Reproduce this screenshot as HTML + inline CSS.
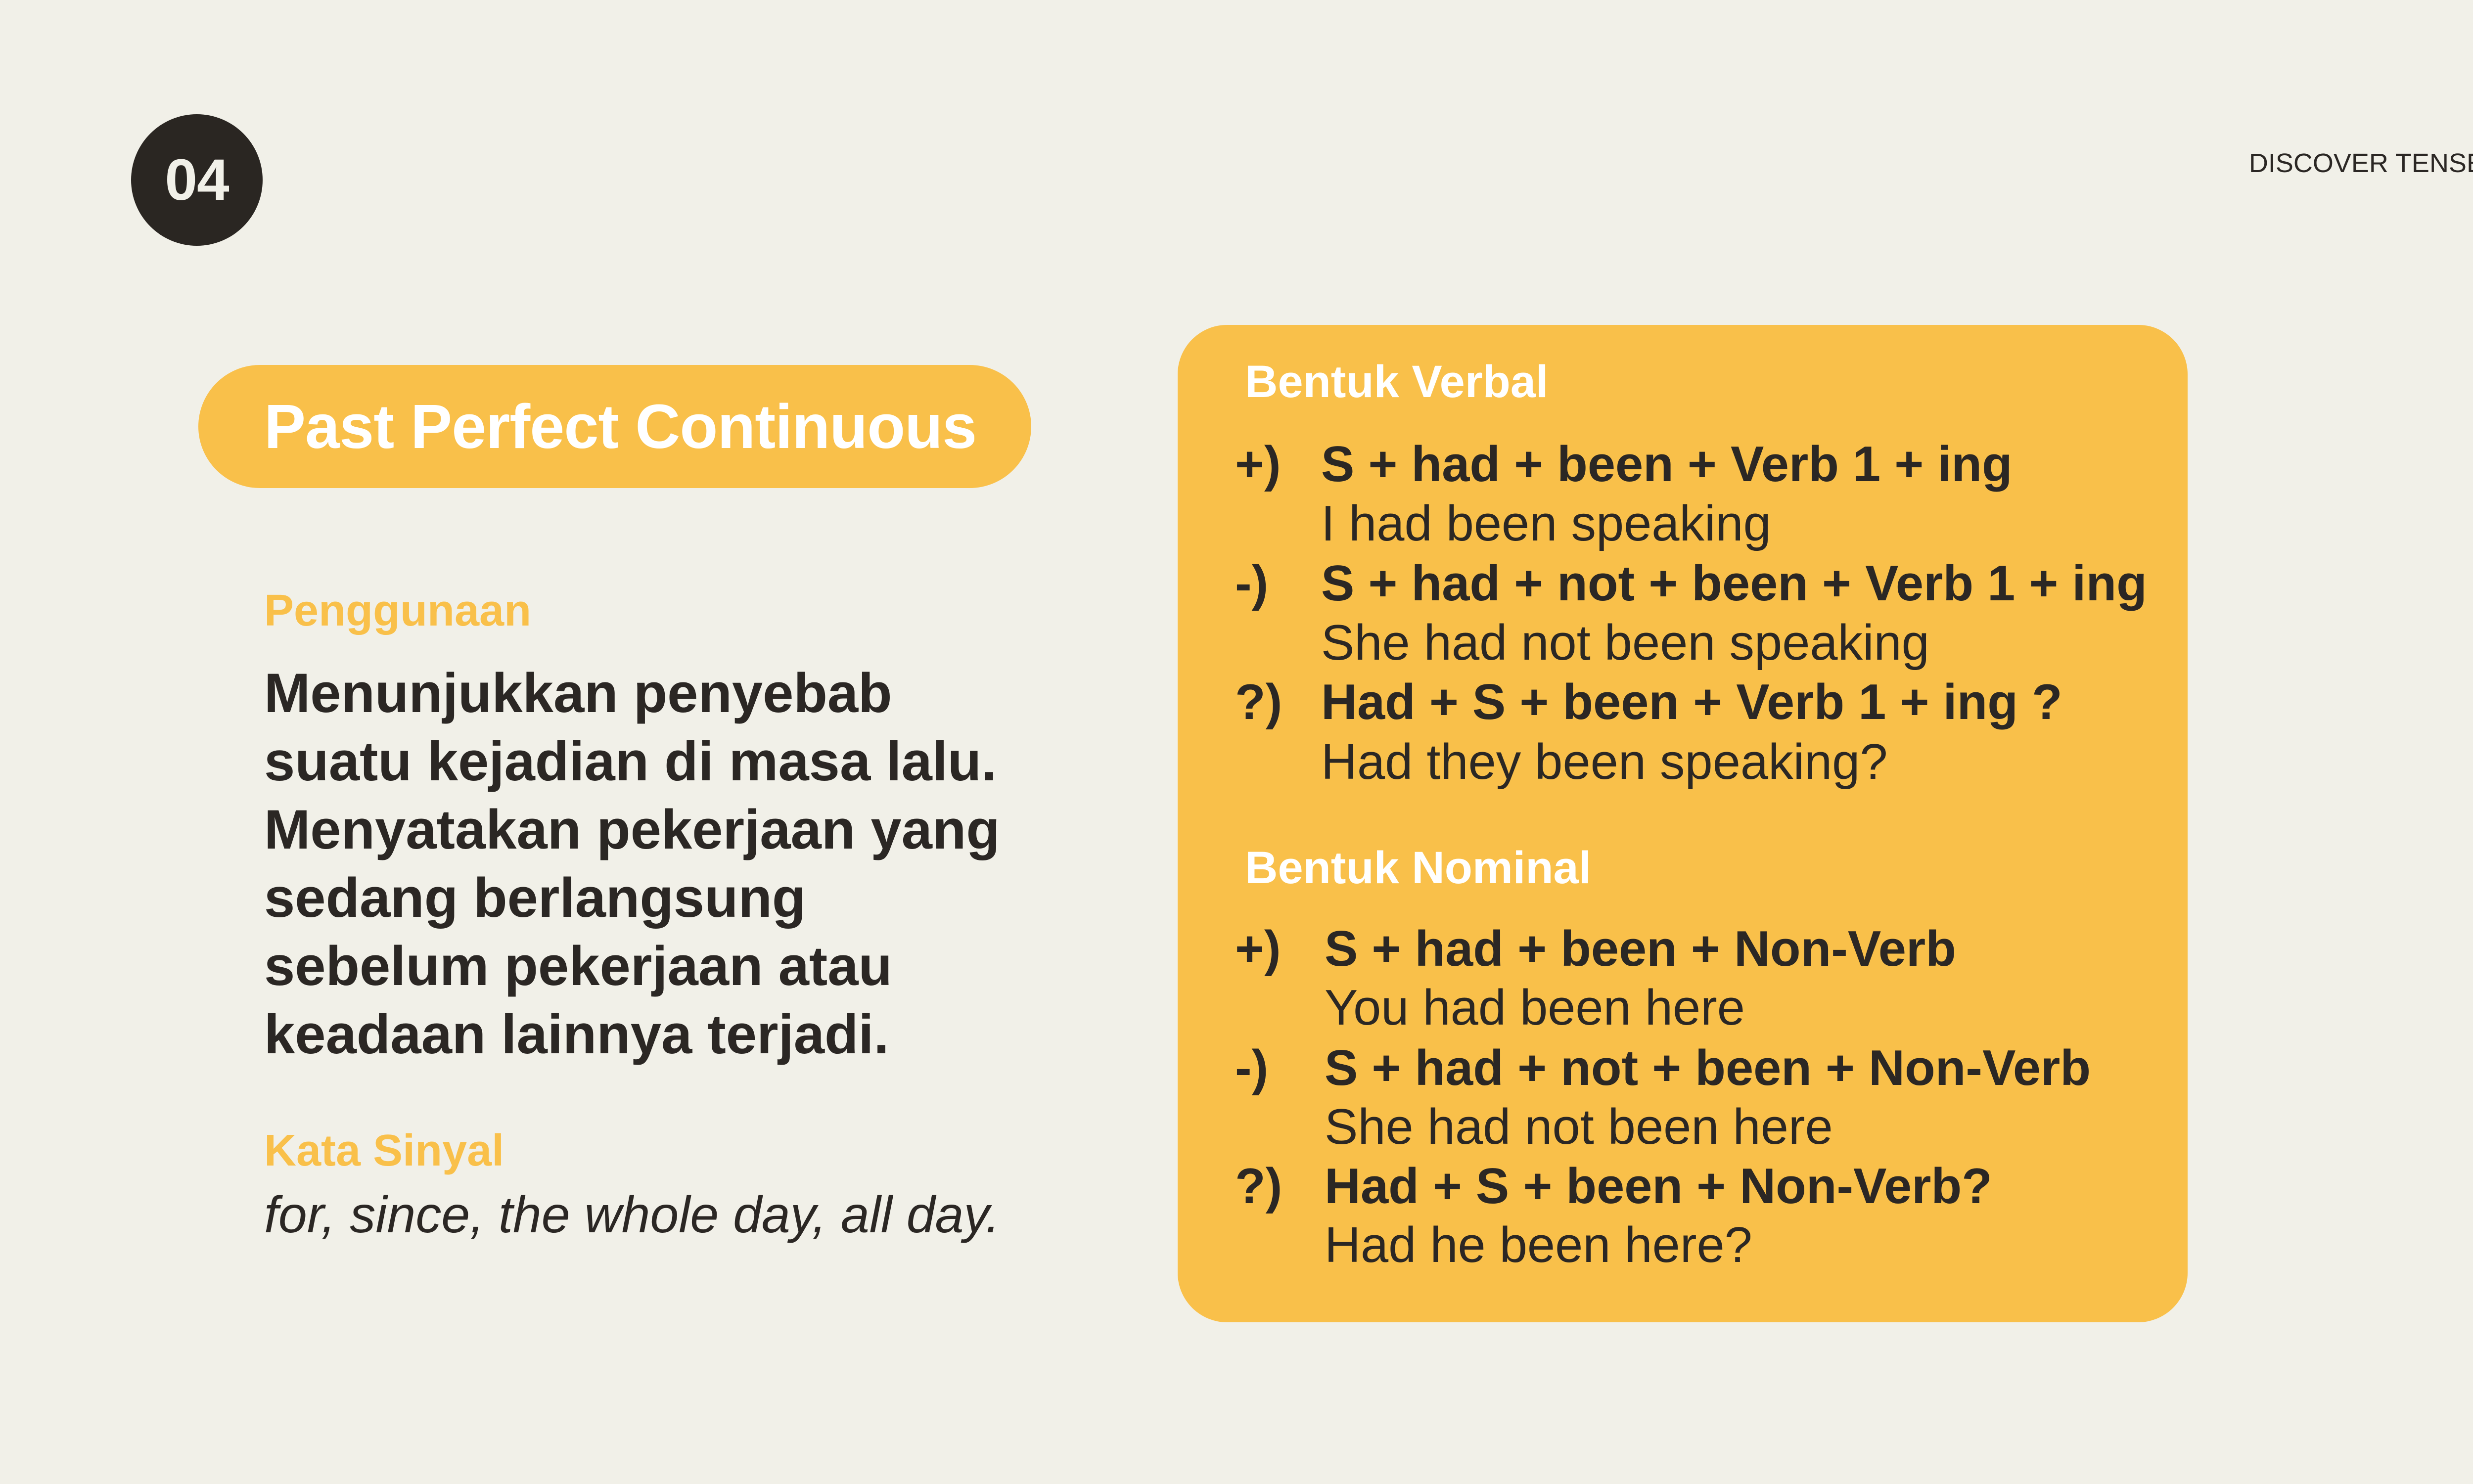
<!DOCTYPE html>
<html><head><meta charset="utf-8"><style>
html,body{margin:0;padding:0}
body{width:5334px;height:3001px;background:#f1f0e8;position:relative;overflow:hidden;font-family:"Liberation Sans",sans-serif;color:#2b2724}
.a{position:absolute;white-space:nowrap}
.circle{left:265px;top:231px;width:266px;height:266px;border-radius:50%;background:#2a2622;color:#f1f0e8;font-weight:bold;font-size:118px;text-align:center;line-height:266px;letter-spacing:-1px}
.pill{left:401px;top:738px;width:1684px;height:249px;border-radius:125px;background:#f9c04a}
.card{left:2381px;top:657px;width:2042px;height:2017px;border-radius:100px;background:#f9c04a}
.b{font-weight:bold}
.l{line-height:120px;height:120px;font-size:101px}
</style></head><body>
<div class="a circle">04</div>
<div class="a" style="left:4425px;top:298px;font-size:54px;line-height:64px;width:634px;text-align:right">DISCOVER TENSES</div>
<div class="a pill"></div>
<div class="a b" style="left:534px;top:790px;font-size:126px;line-height:145px;color:#fff;letter-spacing:-1px">Past Perfect Continuous</div>

<div class="a b" style="left:534px;top:1183px;font-size:90px;line-height:104px;color:#f9c04a">Penggunaan</div>
<div class="a b" style="left:534px;top:1333px;font-size:112px;line-height:138px;letter-spacing:0px">Menunjukkan penyebab<br>suatu kejadian di masa lalu.<br>Menyatakan pekerjaan yang<br>sedang berlangsung<br>sebelum pekerjaan atau<br>keadaan lainnya terjadi.</div>
<div class="a b" style="left:534px;top:2275px;font-size:90px;line-height:104px;color:#f9c04a">Kata Sinyal</div>
<div class="a" style="left:534px;top:2397px;font-size:104px;line-height:120px;font-style:italic">for, since, the whole day, all day.</div>

<div class="a card"></div>
<div class="a b" style="left:2517px;top:720px;font-size:92px;line-height:104px;color:#fff">Bentuk Verbal</div>
<div class="a b l" style="left:2497px;top:879px">+)</div>
<div class="a b l" style="left:2671px;top:879px">S + had + been + Verb 1 + ing</div>
<div class="a l" style="left:2671px;top:999px">I had been speaking</div>
<div class="a b l" style="left:2497px;top:1120px">-)</div>
<div class="a b l" style="left:2671px;top:1120px">S + had + not + been + Verb 1 + ing</div>
<div class="a l" style="left:2671px;top:1240px">She had not been speaking</div>
<div class="a b l" style="left:2497px;top:1360px">?)</div>
<div class="a b l" style="left:2671px;top:1360px">Had + S + been + Verb 1 + ing ?</div>
<div class="a l" style="left:2671px;top:1481px">Had they been speaking?</div>

<div class="a b" style="left:2517px;top:1703px;font-size:92px;line-height:104px;color:#fff">Bentuk Nominal</div>
<div class="a b l" style="left:2497px;top:1859px">+)</div>
<div class="a b l" style="left:2678px;top:1859px">S + had + been + Non-Verb</div>
<div class="a l" style="left:2678px;top:1978px">You had been here</div>
<div class="a b l" style="left:2497px;top:2100px">-)</div>
<div class="a b l" style="left:2678px;top:2100px">S + had + not + been + Non-Verb</div>
<div class="a l" style="left:2678px;top:2219px">She had not been here</div>
<div class="a b l" style="left:2497px;top:2339px">?)</div>
<div class="a b l" style="left:2678px;top:2339px">Had + S + been + Non-Verb?</div>
<div class="a l" style="left:2678px;top:2458px">Had he been here?</div>
</body></html>
